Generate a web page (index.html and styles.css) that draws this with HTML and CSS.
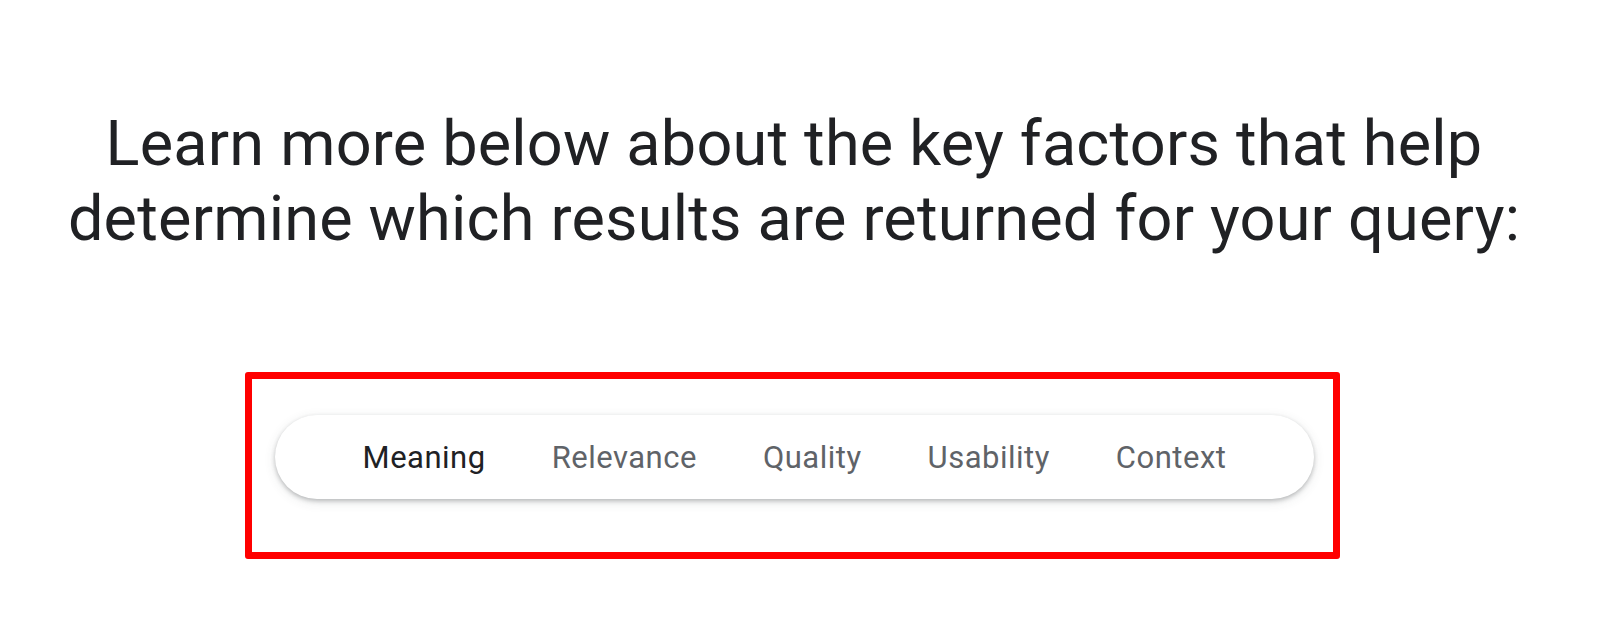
FILE: index.html
```html
<!DOCTYPE html>
<html lang="en">
<head>
    <meta charset="UTF-8">
    <meta name="viewport" content="width=device-width, initial-scale=1.0">
    <title>How Search works</title>
    <link rel="stylesheet" href="styles.css">
</head>
<body>
    <div class="page">
        <h1 class="intro">Learn more below about the key factors that help<br>determine which results are returned for your query:</h1>

        <div class="highlight">
            <nav class="factors">
                <a class="factor active" href="#meaning">Meaning</a>
                <a class="factor" href="#relevance">Relevance</a>
                <a class="factor" href="#quality">Quality</a>
                <a class="factor" href="#usability">Usability</a>
                <a class="factor" href="#context">Context</a>
            </nav>
        </div>
    </div>
</body>
</html>
```

FILE: styles.css
```css
body, html {
    margin: 0;
    padding: 0;
    background-color: #fff;
    font-family: 'Roboto', 'Liberation Sans', sans-serif;
    color: #202124;
}

.page {
    padding: 106px 12px 0 0;
}

.intro {
    margin: 0;
    font-size: 63px;
    font-weight: 400;
    line-height: 75px;
    letter-spacing: 0.2px;
    text-align: center;
    color: #202124;
}

.highlight {
    box-sizing: border-box;
    width: 1095px;
    height: 187px;
    margin: 116px 0 0 245px;
    padding: 36px 19px 0 23px;
    border: 7px solid #ff0000;
    border-radius: 3px;
}

.factors {
    display: flex;
    justify-content: center;
    align-items: center;
    gap: 66px;
    height: 84px;
    background-color: #fff;
    border-radius: 42px;
    box-shadow: 0 2px 4px rgba(60, 64, 67, 0.3), 0 3px 12px rgba(60, 64, 67, 0.12);
}

.factor {
    font-size: 31px;
    letter-spacing: 0.5px;
    color: #5f6368;
    text-decoration: none;
}

.factor.active {
    color: #202124;
}
```
